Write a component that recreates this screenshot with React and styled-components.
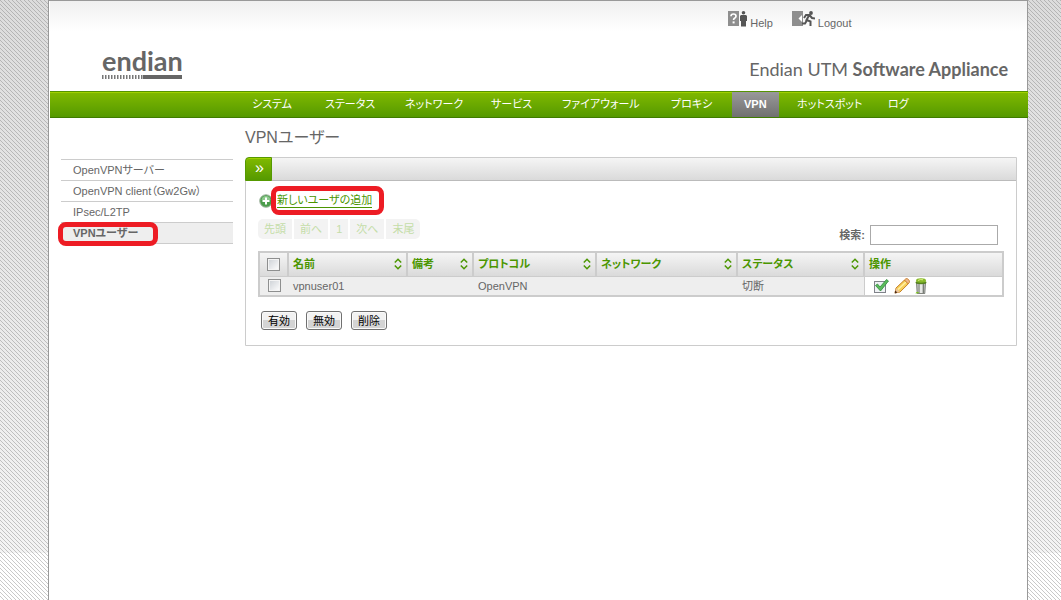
import React, { useState } from "react";
import styled, { createGlobalStyle, css } from "styled-components";

const menus = [
  { label: "システム", width: 73 },
  { label: "ステータス", width: 80 },
  { label: "ネットワーク", width: 86 },
  { label: "サービス", width: 71 },
  { label: "ファイアウォール", width: 109 },
  { label: "プロキシ", width: 73 },
  { label: "VPN", width: 53, active: true },
  { label: "ホットスポット", width: 91 },
  { label: "ログ", width: 60 },
];

const sideMenus = [
  { label: "OpenVPNサーバー" },
  { label: "OpenVPN client（Gw2Gw）" },
  { label: "IPsec/L2TP" },
  { label: "VPNユーザー", active: true },
];

const pages = ["先頭", "前へ", "1", "次へ", "末尾"];

const columns = [
  { label: "名前", width: 119 },
  { label: "備考", width: 66 },
  { label: "プロトコル", width: 123 },
  { label: "ネットワーク", width: 141 },
  { label: "ステータス", width: 127 },
];

const users = [
  { name: "vpnuser01", remark: "", protocol: "OpenVPN", network: "", status: "切断" },
];

function HelpIcon() {
  return (
    <svg width="19" height="16" viewBox="0 0 19 16" aria-hidden="true">
      <rect width="11" height="15" fill="#8e8e8e" />
      <path d="M3 5.2Q3 3 5.5 3T8 5.2Q8 6.5 6.5 7.3Q5.6 7.8 5.6 9" fill="none" stroke="#fff" strokeWidth="1.7" />
      <rect x="4.6" y="10.4" width="2" height="2" fill="#fff" />
      <circle cx="15.5" cy="1.8" r="1.8" fill="#555" />
      <path d="M13 4h5l1 1v5h-1v5.500h-5V10h-1V5z" fill="#555" />
    </svg>
  );
}

function LogoutIcon() {
  return (
    <svg width="23" height="16" viewBox="0 0 23 16" aria-hidden="true">
      <rect width="11" height="15" fill="#8e8e8e" />
      <path d="M10 4v7L6.500 7.500z" fill="#fff" />
      <circle cx="19" cy="2" r="1.900" fill="#555" />
      <path
        d="M12 7l2-3h3.500l2.500 3 3 .5M17 4.500l-2.500 4.500 4 1.500v4.500M14.800 9.500L13 12.500h-3"
        fill="none"
        stroke="#555"
        strokeWidth="2"
      />
    </svg>
  );
}

function AddIcon() {
  return (
    <svg width="14" height="14" viewBox="0 0 14 14" aria-hidden="true">
      <circle cx="7" cy="7" r="6.300" fill="#4c9d4c" stroke="#a7b9a7" />
      <path d="M2.500 6Q3 2 7 2t4.500 4z" fill="#8cc98c" />
      <path d="M7 3.500v7M3.500 7h7" stroke="#fff" strokeWidth="2" />
    </svg>
  );
}

function SortIcon() {
  return (
    <svg width="8" height="12" viewBox="0 0 8 12" aria-hidden="true">
      <path d="M.8 4.500L4 1.300l3.200 3.200M.8 7.500L4 10.700l3.200-3.200" fill="none" stroke="#4b9600" strokeWidth="1.500" />
    </svg>
  );
}

function CheckIcon() {
  return (
    <svg width="16" height="16" viewBox="0 0 16 16" aria-hidden="true">
      <rect x="1.500" y="3.500" width="11" height="11" fill="#f0f2f5" stroke="#80838a" />
      <path d="M2.500 7.500l2-1.500 2.500 3L13.500 1.500 15.500 3 7.500 13z" fill="#5bbb5b" stroke="#2f8c3c" strokeWidth=".8" />
    </svg>
  );
}

function PencilIcon() {
  return (
    <svg width="16" height="16" viewBox="0 0 16 16" aria-hidden="true">
      <path d="M1 15l1-5L10.500 2l3.800 3.800L6 14z" fill="#f7cf58" stroke="#c1761c" strokeWidth=".9" />
      <path d="M4 11.500L12 4" stroke="#fff0a8" strokeWidth="1.500" />
      <path d="M10.500 2l1.300-1.200Q13 0 14.500 1.500T15.300 4.500l-1.100 1.300z" fill="#f0b98c" stroke="#c1761c" strokeWidth=".8" />
      <path d="M2 10l4 4-5 1.300z" fill="#eac49b" />
      <path d="M1.200 12.500l2.200 2L.7 15.400z" fill="#4b2a13" />
    </svg>
  );
}

function TrashIcon() {
  return (
    <svg width="12" height="16" viewBox="0 0 12 16" aria-hidden="true">
      <path d="M1.500 5h9L9.800 15.500H2.200z" fill="#bfc2bd" stroke="#686c66" strokeWidth=".8" />
      <path d="M4 6v9" stroke="#8d918c" />
      <path d="M8.500 6v9" stroke="#7a7e79" />
      <path d="M6 6v9" stroke="#f5f5f5" strokeWidth="1.500" />
      <ellipse cx="6" cy="4.500" rx="5.500" ry="1.700" fill="#55821e" />
      <ellipse cx="6" cy="2.500" rx="5" ry="2.200" fill="#86b92a" />
      <path d="M3 2.500Q5 1 8 1.800" stroke="#dcef83" fill="none" />
      <path d="M.5 15.500q1-2.500 4-.5z" fill="#7cc718" />
    </svg>
  );
}

function Logo() {
  const ticks = Array.from({ length: 14 }, (_, i) => i * 3);
  return (
    <svg width="84" height="46" viewBox="0 0 84 46" role="img" aria-label="endian">
      <LogoText x="0" y="35">endian</LogoText>
      {ticks.map((x) => (
        <rect key={x} x={x} y="39" width="1.500" height="4" fill="#777" />
      ))}
      <rect x="41" y="39" width="39" height="4" fill="#666" />
    </svg>
  );
}

function App() {
  const [selected, setSelected] = useState([]);
  const [keyword, setKeyword] = useState("");

  const rows = users.filter((user) => user.name.includes(keyword));

  const toggleAll = (e) => {
    setSelected(e.target.checked ? users.map((user) => user.name) : []);
  };

  const toggleUser = (name) => {
    setSelected((prev) =>
      prev.includes(name) ? prev.filter((item) => item !== name) : [...prev, name]
    );
  };

  return (
    <>
      <GlobalStyle />
      <Page>
        <Header>
          <Logo />
          <HeaderRight>
            <Tools>
              <ToolLink href="#help">
                <HelpIcon />
                Help
              </ToolLink>
              <ToolLink href="#logout">
                <LogoutIcon />
                Logout
              </ToolLink>
            </Tools>
            <Product>
              Endian UTM <b>Software Appliance</b>
            </Product>
          </HeaderRight>
        </Header>
        <Nav>
          {menus.map((menu) => (
            <NavItem key={menu.label} $width={menu.width}>
              <NavLink href="#menu" $active={menu.active}>
                {menu.label}
              </NavLink>
            </NavItem>
          ))}
        </Nav>
        <Body>
          <SideList>
            {sideMenus.map((menu) => (
              <SideItem key={menu.label} $active={menu.active}>
                <a href="#side">{menu.label}</a>
                {menu.active && <SideMark />}
              </SideItem>
            ))}
          </SideList>
          <Main>
            <Title>VPNユーザー</Title>
            <Panel>
              <PanelBar>
                <PanelTab type="button">»</PanelTab>
              </PanelBar>
              <PanelBody>
                <AddRow>
                  <AddIcon />
                  <AddLink href="#add">新しいユーザの追加</AddLink>
                  <AddMark />
                </AddRow>
                <Controls>
                  <Pager>
                    {pages.map((page) => (
                      <PageButton key={page} type="button" disabled>
                        {page}
                      </PageButton>
                    ))}
                  </Pager>
                  <Search>
                    <label htmlFor="search">検索:</label>
                    <SearchInput
                      id="search"
                      value={keyword}
                      onChange={(e) => setKeyword(e.target.value)}
                    />
                  </Search>
                </Controls>
                <Table>
                  <colgroup>
                    <Col $width={29} />
                    {columns.map((column) => (
                      <Col key={column.label} $width={column.width} />
                    ))}
                    <col />
                  </colgroup>
                  <thead>
                    <tr>
                      <Th>
                        <Check
                          type="checkbox"
                          aria-label="すべて選択"
                          checked={selected.length === users.length}
                          onChange={toggleAll}
                        />
                      </Th>
                      {columns.map((column) => (
                        <Th key={column.label}>
                          <SortButton type="button">
                            {column.label}
                            <SortIcon />
                          </SortButton>
                        </Th>
                      ))}
                      <Th>操作</Th>
                    </tr>
                  </thead>
                  <tbody>
                    {rows.map((user) => (
                      <tr key={user.name}>
                        <Td>
                          <Check
                            type="checkbox"
                            aria-label={user.name}
                            checked={selected.includes(user.name)}
                            onChange={() => toggleUser(user.name)}
                          />
                        </Td>
                        <Td>{user.name}</Td>
                        <Td>{user.remark}</Td>
                        <Td>{user.protocol}</Td>
                        <Td>{user.network}</Td>
                        <Td>{user.status}</Td>
                        <Td $plain>
                          <Actions>
                            <IconButton type="button" aria-label="有効">
                              <CheckIcon />
                            </IconButton>
                            <IconButton type="button" aria-label="編集">
                              <PencilIcon />
                            </IconButton>
                            <IconButton type="button" aria-label="削除">
                              <TrashIcon />
                            </IconButton>
                          </Actions>
                        </Td>
                      </tr>
                    ))}
                  </tbody>
                </Table>
                <Buttons>
                  <Button type="button">有効</Button>
                  <Button type="button">無効</Button>
                  <Button type="button">削除</Button>
                </Buttons>
              </PanelBody>
            </Panel>
          </Main>
        </Body>
      </Page>
    </>
  );
}

export default App;

// 斜めストライプの背景タイル
const stripe =
  "url(\"data:image/svg+xml,%3Csvg xmlns='http://www.w3.org/2000/svg' width='4' height='4' shape-rendering='crispEdges'%3E%3Cpath fill='%23777' fill-opacity='.4' d='M0 0h1v1H0zM1 1h1v1H1zM2 2h1v1H2zM3 3h1v1H3z'/%3E%3C/svg%3E\")";

const GlobalStyle = createGlobalStyle`
  * {
    box-sizing: border-box;
  }
  body {
    margin: 0;
    color: #666;
    font-family: "Liberation Sans", "Noto Sans CJK JP", sans-serif;
    font-size: 11px;
    line-height: 16px;
    font-feature-settings: "palt";
    background-color: #fff;
    background-image: ${stripe}, linear-gradient(#dcdcdc, #f4f4f4);
    background-repeat: repeat, repeat-x;
    background-size: 4px 4px, 100% 553px;
  }
  button,
  input {
    font: inherit;
    font-feature-settings: inherit;
  }
  a {
    color: inherit;
    text-decoration: none;
  }
  svg {
    display: block;
    flex: none;
  }
`;

const Page = styled.div`
  min-height: 100vh;
  margin: 0 33px 0 48px;
  padding-left: 1px;
  border: solid #999;
  border-width: 1px 1px 0;
  background: #fff;
`;

const Header = styled.header`
  display: flex;
  justify-content: space-between;
  align-items: flex-start;
  height: 90px;
  padding: 10px 19px 0 52px;
  background: linear-gradient(#f0f0f0, #fff 30px);

  > svg {
    margin-top: 25px;
  }
`;

const LogoText = styled.text`
  fill: #666;
  font-family: Lato, sans-serif;
  font-size: 27px;
  font-weight: bold;
`;

const HeaderRight = styled.div`
  display: flex;
  flex-direction: column;
  gap: 24px;
`;

const Tools = styled.div`
  display: flex;
  gap: 19px;
  margin-left: -21px;
`;

const ToolLink = styled.a`
  display: flex;
  gap: 3px;
  line-height: 24px;
`;

const Product = styled.div`
  font-family: Lato, sans-serif;
  font-size: 18px;
  line-height: 20px;
  white-space: nowrap;
`;

const greenBar = css`
  background: linear-gradient(#80b900, #559900);
  box-shadow: inset 0 1px #a0d000;
`;

const Nav = styled.nav`
  display: flex;
  height: 27px;
  margin-right: -1px;
  padding-left: 190px;
  border-top: 1px solid #559400;
  border-bottom: 1px solid #3f7c00;
  ${greenBar}
`;

const NavItem = styled.div`
  flex: 0 0 ${(props) => props.$width}px;
`;

const NavLink = styled.a`
  display: inline-block;
  padding: 0 12px;
  color: #fff;
  line-height: 25px;
  white-space: nowrap;
  ${(props) =>
    props.$active &&
    css`
      background: linear-gradient(#999, #707070);
      font-weight: bold;
    `}
`;

const Body = styled.div`
  display: flex;
  align-items: flex-start;
  gap: 12px;
  padding: 8px 10px 0 11px;
`;

const SideList = styled.ul`
  flex: 0 0 172px;
  margin: 33px 0 0;
  padding: 0;
  border-top: 1px solid #ccc;
  list-style: none;
`;

const SideItem = styled.li`
  position: relative;
  height: 21px;
  padding-left: 12px;
  border-bottom: 1px solid #ccc;
  line-height: 20px;
  ${(props) =>
    props.$active &&
    css`
      background: #eee;
      font-weight: bold;
    `}
`;

const redMark = css`
  position: absolute;
  border: 5px solid #ed1c24;
  border-radius: 8px;
  pointer-events: none;
`;

const SideMark = styled.span`
  ${redMark}
  top: -1px;
  left: -3px;
  width: 100px;
  height: 24px;
`;

const Main = styled.main`
  flex: 1;
  min-width: 0;
`;

const Title = styled.h1`
  margin: 0 0 7px;
  font-size: 16px;
  font-weight: normal;
  line-height: 24px;
`;

const Panel = styled.section`
  border: 1px solid #ccc;
  border-top-left-radius: 4px;
`;

const PanelBar = styled.div`
  display: flex;
  height: 23px;
  border-bottom: 1px solid #bbb;
  background: linear-gradient(#f5f5f5, #dadada);
`;

const PanelTab = styled.button`
  width: 27px;
  height: 24px;
  margin: -1px 0 0 -1px;
  padding: 0 0 2px 2px;
  border: 1px solid #559900;
  border-top-left-radius: 4px;
  color: #fff;
  font-size: 16px;
  line-height: 16px;
  ${greenBar}
`;

const PanelBody = styled.div`
  padding: 12px 12px 15px;
`;

const AddRow = styled.div`
  position: relative;
  display: flex;
  align-items: center;
  gap: 4px;
  height: 16px;
  padding-left: 1px;
`;

const AddLink = styled.a`
  border-bottom: 1px solid #4b9600;
  color: #4b9600;
  line-height: 13px;
`;

const AddMark = styled.span`
  ${redMark}
  top: -7px;
  left: 13px;
  width: 113px;
  height: 29px;
`;

const Controls = styled.div`
  display: flex;
  justify-content: space-between;
  height: 42px;
  padding-top: 10px;
`;

const Pager = styled.div`
  display: flex;
  gap: 2px;
`;

const PageButton = styled.button`
  height: 20px;
  padding: 0 6px;
  border: none;
  background: #f3f3f3;
  color: #c4dda8;

  &:first-child {
    border-radius: 5px 0 0 5px;
  }
  &:last-child {
    border-radius: 0 5px 5px 0;
  }
`;

const Search = styled.div`
  display: flex;
  align-items: center;
  gap: 5px;
  height: 20px;
  margin: 6px 6px 0 0;
  font-weight: bold;
`;

const SearchInput = styled.input`
  width: 128px;
  height: 20px;
  border: 1px solid #aaa;
  outline: none;
  font-weight: normal;
`;

const Table = styled.table`
  width: 100%;
  border: 2px solid #ccc;
  border-collapse: collapse;
  table-layout: fixed;
`;

const Col = styled.col`
  width: ${(props) => props.$width}px;
`;

const Th = styled.th`
  height: 24px;
  padding: 0 4px;
  border: 2px solid #ccc;
  border-bottom-width: 1px;
  background: linear-gradient(#f5f5f5, #dadada);
  color: #4b9600;
  text-align: left;
`;

const Td = styled.td`
  height: 20px;
  padding: 0 5px;
  border-top: 1px solid #ccc;
  border-left: ${(props) => (props.$plain ? "1px solid #ccc" : "none")};
  background: ${(props) => (props.$plain ? "#fff" : "#eee")};
`;

const SortButton = styled.button`
  display: flex;
  justify-content: space-between;
  align-items: center;
  width: 100%;
  padding: 0;
  border: none;
  background: none;
  color: inherit;
  text-align: left;
`;

const Check = styled.input`
  appearance: none;
  display: block;
  width: 13px;
  height: 13px;
  margin: 0 auto;
  border: 1px solid #8e8f8f;
  background: linear-gradient(135deg, #ccd0d5, #fff);
  box-shadow: inset 0 0 0 1px #f4f4f4;

  &:checked {
    background: #4b9600;
  }
`;

const Actions = styled.div`
  display: flex;
  gap: 5px;
  padding-left: 3px;
`;

const IconButton = styled.button`
  padding: 0;
  border: none;
  background: none;
`;

const Buttons = styled.div`
  display: flex;
  gap: 9px;
  padding: 14px 3px 0;
`;

const Button = styled.button`
  width: 36px;
  height: 19px;
  padding: 0;
  border: 1px solid #707070;
  border-radius: 3px;
  background: linear-gradient(#f2f2f2 50%, #d4d4d4 50%);
  box-shadow: inset 0 0 0 1px #fafafa;
  color: #000;
  line-height: 16px;
`;
